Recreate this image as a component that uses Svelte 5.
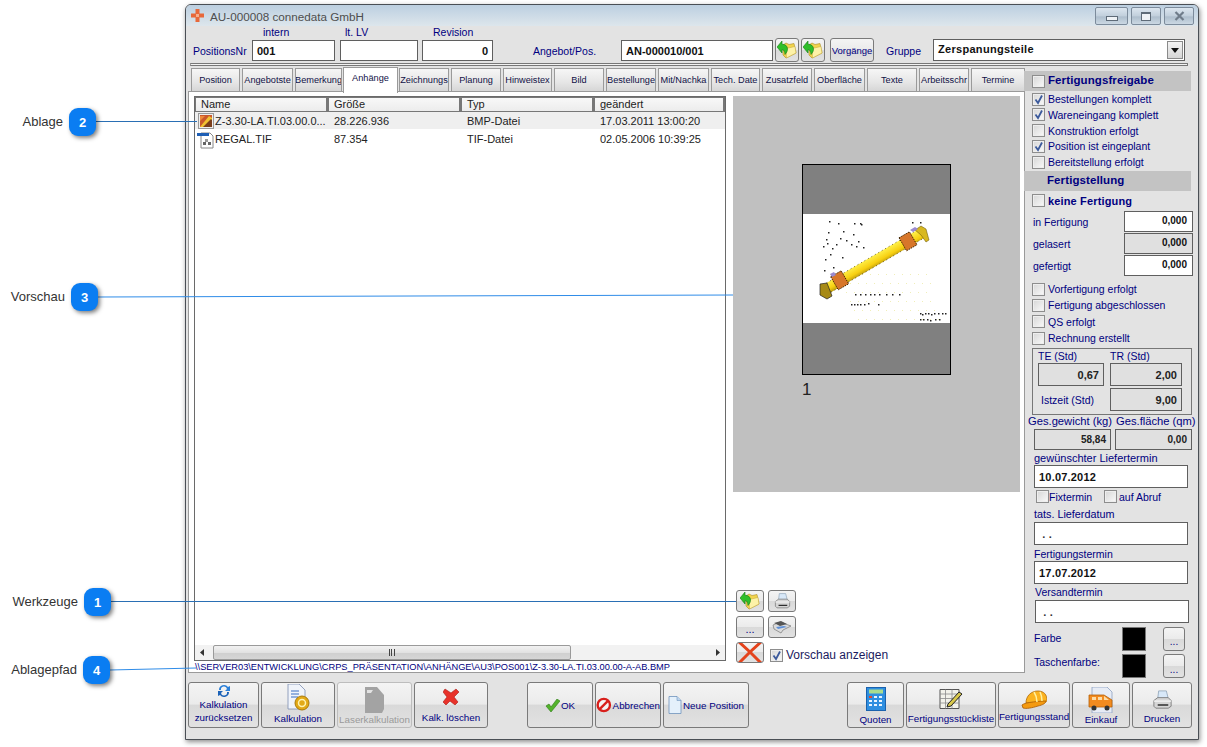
<script>
  const tabs = ['Position','Angebotste','Bemerkung','Anhänge','Zeichnungs','Planung','Hinweistex','Bild','Bestellunge','Mit/Nachka','Tech. Date','Zusatzfeld','Oberfläche','Texte','Arbeitsschr','Termine'];
  const callouts = [
    { label:'Ablage', n:2, cls:'c2', x1:96, y1:121.5, x2:197, y2:121.5, col:'#2a6fb4' },
    { label:'Vorschau', n:3, cls:'c3', x1:98, y1:297, x2:733, y2:295, col:'#2f8ce8' },
    { label:'Werkzeuge', n:1, cls:'c1', x1:111, y1:601.5, x2:736, y2:601.5, col:'#2a6fb4' },
    { label:'Ablagepfad', n:4, cls:'c4', x1:110, y1:670, x2:196, y2:668, col:'#2f8ce8' }
  ];
  const pathText = '\\\\SERVER03\\ENTWICKLUNG\\CRPS_PRÄSENTATION\\ANHÄNGE\\AU3\\POS001\\Z-3.30-LA.TI.03.00.00-A-AB.BMP';
  const firstChecks = [['Bestellungen komplett',true],['Wareneingang komplett',true],['Konstruktion erfolgt',false],['Position ist eingeplant',true],['Bereitstellung erfolgt',false]];
  const secondChecks = ['Vorfertigung erfolgt','Fertigung abgeschlossen','QS erfolgt','Rechnung erstellt'];
  const dots = [[27,7],[36,9],[52,9],[58,9],[59,10],[26,18],[41,17],[51,20],[38,24],[24,25],[56,27],[44,26],[49,30],[34,30],[25,29],[21,32],[30,34],[54,32],[61,33],[23,45],[40,43],[28,40],[22,56],[31,53],[110,8],[118,8],
    [53,80],[58,80],[63,80],[68,80],[72,80],[77,80],[84,80],[90,80],[97,80],[49,90],[52,90],[55,90],[58,90],[62,90],[66,89],[76,90],[118,99],[120,100],[123,99],[126,99],[129,100],[132,99],[136,99],[140,99],[143,99],[118,105],[121,105],[125,105],[128,106],[133,105],[137,105]];
  const faint = [];
  for (let r = 0; r < 6; r++) for (let c = 0; c < 14; c++) {
    const x = 28 + c * 8 + (r % 2) * 4, y = 60 + r * 9;
    if (x + (108 - y) * 0.6 > 55 && x < 144 - (108 - y) * 0.4) faint.push([x, y]);
  }
</script>

{#snippet cb(on)}
  <span class="cb">{#if on}<svg width="11" height="11" viewBox="0 0 11 11"><path d="M2.5 5.500 5 9 9 1.500" fill="none" stroke="#3c5a9c" stroke-width="1.800"/></svg>{/if}</span>
{/snippet}

{#snippet folder()}
  <svg width="20" height="20" viewBox="0 0 20 20">
    <path d="M6 5 9 3l3 1.500 5-1 2 9.500-10 5-3-3z" fill="#f2d44e" stroke="#a98b25" stroke-width=".6"/>
    <path d="M9 8.500l9-2 1 6.500-9.500 5z" fill="#fdf2a8" stroke="#c2a63a" stroke-width=".5"/>
    <path d="M0 7 5 1v3.200c3.500 0 5.500 2 5.500 4.800 0 2-.8 3.500-2.500 5.500-.3-3-1-4.800-3-4.800V13z" fill="#2fbf2a" stroke="#147a18" stroke-width=".6"/>
  </svg>
{/snippet}

{#snippet printer(s)}
  <svg width={s} height={s} viewBox="0 0 24 24">
    <path d="M8 2h8l2 8H7z" fill="#d8e8f8" stroke="#8aa0b5" stroke-width=".8"/>
    <path d="M3 12l4-3h11l3 3v6l-3 2H5l-2-2z" fill="#d6d6d6" stroke="#767676" stroke-width=".9"/>
    <path d="M7 16h11v1.600H7z" fill="#2e2e2e"/>
    <path d="M3 12h18v1.200H3z" fill="#f5f5f5"/>
  </svg>
{/snippet}

<div class="stage">
  {#each callouts as c}
    <div class="callout {c.cls}">
      <span class="ctext">{c.label}</span>
      <span class="badge">{c.n}</span>
    </div>
  {/each}

  <section class="window">
    <header class="titlebar">
      <svg class="appicon" width="13" height="13" viewBox="0 0 13 13">
        <path d="M4.500 0h4v4.500H13v4H8.500V13h-4V8.500H0v-4h4.500z" fill="#e8683a"/>
        <path d="M5 5h3v3H5z" fill="#f6b08f"/>
      </svg>
      <span class="title">AU-000008 connedata GmbH</span>
      <div class="winctl">
        <span class="wbtn wmin"><i></i></span>
        <span class="wbtn wmax"><i></i></span>
        <span class="wbtn wclose">
          <svg width="11" height="10" viewBox="0 0 11 10"><path d="M1.500 1l8 8M9.500 1l-8 8" stroke="#6f7c8a" stroke-width="2.200" fill="none"/></svg>
        </span>
      </div>
    </header>

    <div class="head">
      <span></span>
      <span class="lb l-intern">intern</span>
      <span class="lb l-lv">lt. LV</span>
      <span class="lb l-rev">Revision</span>
      <span class="rest"></span>

      <span class="lb up">PositionsNr</span>
      <div class="field bold">001</div>
      <div class="field g5"></div>
      <div class="field bold right g4">0</div>
      <span class="lb angebot up">Angebot/Pos.</span>
      <div class="field bold">AN-000010/001</div>
      <button class="btn small g2">{@render folder()}</button>
      <button class="btn small g2">{@render folder()}</button>
      <button class="btn vorg g5">Vorgänge</button>
      <span class="lb gruppe up">Gruppe</span>
      <div class="field bold select">
        <span class="seltext">Zerspanungsteile</span>
        <span class="arrow"><svg width="8" height="5" viewBox="0 0 8 5"><path d="M0 0h8L4 5z" fill="#111"/></svg></span>
      </div>
    </div>

    <div class="sep"></div>

    <div class="main">
      <div class="left">
        <nav class="tabs">
          {#each tabs as t}
            <span class="tab" class:active={t === 'Anhänge'}>{t}</span>
          {/each}
        </nav>
        <div class="panel">
          <div class="content">
            <div class="list">
              <div class="lhead">
                <span>Name</span><span>Größe</span><span>Typ</span><span>geändert</span>
              </div>
              <div class="row sel">
                <span class="namecell">
                  <svg class="ficon" width="16" height="16" viewBox="0 0 16 16">
                    <rect x=".5" y=".5" width="15" height="15" fill="#eee" stroke="#999"/>
                    <rect x="2" y="2" width="12" height="12" fill="#c9582c"/>
                    <path d="M2 14 11 3l3 2v9z" fill="#f1c232"/>
                    <path d="M5 14l8-8 1 1v7z" fill="#7a3e1c"/>
                    <path d="M2 8l5-5H2z" fill="#f08a3a"/>
                  </svg>Z-3.30-LA.TI.03.00.0...</span>
                <span>28.226.936</span><span>BMP-Datei</span><span>17.03.2011 13:00:20</span>
              </div>
              <div class="row">
                <span class="namecell tif">
                  <svg class="ficon" width="18" height="17" viewBox="0 0 18 17">
                    <path d="M4 1h9l3 3v12H4z" fill="#fff" stroke="#888"/>
                    <rect x="0" y="1" width="12" height="3" fill="#1f5fb5"/>
                    <rect x="6" y="10" width="3" height="3" fill="#666"/><rect x="11" y="10" width="3" height="3" fill="#666"/><rect x="8" y="7" width="3" height="3" fill="#999"/>
                  </svg>REGAL.TIF</span>
                <span>87.354</span><span>TIF-Datei</span><span>02.05.2006 10:39:25</span>
              </div>
              <div class="hscroll">
                <span class="sarrow"><svg width="4" height="7" viewBox="0 0 4 7"><path d="M4 0v7L0 3.500z" fill="#333"/></svg></span>
                <div class="thumb"><span class="grip"></span></div>
                <span class="sarrow"><svg width="4" height="7" viewBox="0 0 4 7"><path d="M0 0v7l4-3.500z" fill="#333"/></svg></span>
              </div>
            </div>

            <div class="previewcol">
              <div class="preview">
                <svg class="page" width="149" height="211" viewBox="0 0 149 211">
                  <defs>
                    <linearGradient id="tube" gradientUnits="userSpaceOnUse" x1="66" y1="88" x2="75" y2="104">
                      <stop offset="0" stop-color="#e0b80f"/>
                      <stop offset=".3" stop-color="#fff04a"/>
                      <stop offset=".7" stop-color="#f7cf10"/>
                      <stop offset="1" stop-color="#a88a10"/>
                    </linearGradient>
                  </defs>
                  <rect x=".5" y=".5" width="148" height="210" fill="#808080" stroke="#000"/>
                  <rect x="1" y="50" width="147" height="109" fill="#fff"/>
                  {#each faint as d}<rect x={d[0]} y={d[1] + 50} width="1" height="1" fill="#f0eeb8"/>{/each}
                  <path d="M21 121 117 65l5 9-96 56z" fill="url(#tube)" stroke="#3a2c00" stroke-width=".7" stroke-dasharray="1 3"/>
                  <path d="M18 120l7-1 5 13-5 3-7-4z" fill="#a78a16" stroke="#222" stroke-width=".7"/>
                  <path d="M113 66l6-4 5 3 3 11-3 2-5-7z" fill="#d8b820" stroke="#5c4a00" stroke-width=".5"/>
                  <path d="M28.750 112.800 39.150 106.800 46.650 119.800 36.250 125.800z" fill="#d7762a" stroke="#3e2400" stroke-width="1" stroke-dasharray="1.500 1"/>
                  <path d="M97.050 73.800 107.450 67.800 114.950 80.800 104.550 86.800z" fill="#d7762a" stroke="#3e2400" stroke-width="1" stroke-dasharray="1.500 1"/>
                  <path d="M108 66l5-3 3 2-5 3zM28 110l4-2 2 3-4 2z" fill="#9a8ad0"/>
                  {#each dots as d}<rect x={d[0]} y={d[1] + 50} width="1.500" height="1.500" fill="#222"/>{/each}
                </svg>
                <span class="pnum">1</span>
              </div>
              <div class="tools">
                <button class="btn tool">{@render folder()}</button>
                <button class="btn tool">{@render printer(19)}</button>
                <span></span>
                <button class="btn tool dots">...</button>
                <button class="btn tool">
                  <svg width="20" height="14" viewBox="0 0 20 14"><path d="M1 5l7-3 11 4-8 4-2 3-7-4z" fill="#dcdcdc" stroke="#777" stroke-width=".7"/><path d="M2 3l7-2 6 3-7 2z" fill="#555"/><path d="M4 7l8-1 3 1-9 2z" fill="#5f90d8"/></svg>
                </button>
                <span></span>
                <button class="btn tool xbtn">
                  <svg width="26" height="21" viewBox="0 0 26 21"><path d="M2 0l11 10L24 0M2 21l11-11 11 11" fill="none" stroke="#e4431c" stroke-width="3"/></svg>
                </button>
                <label class="vcheck">{@render cb(true)}<span>Vorschau anzeigen</span></label>
              </div>
            </div>
          </div>
          <div class="path">{pathText}</div>
        </div>
      </div>

      <aside class="side">
        <div class="band"><span class="cbwrap">{@render cb(false)}</span><span class="bandtext">Fertigungsfreigabe</span></div>
        <div class="checks c-a">
          {#each firstChecks as [t, on]}
            <label class="chk">{@render cb(on)}<span>{t}</span></label>
          {/each}
        </div>
        <div class="band two"><span class="bandtext">Fertigstellung</span></div>
        <label class="chk keine">{@render cb(false)}<span>keine Fertigung</span></label>
        <div class="nums">
          <span class="lb">in Fertigung</span><div class="field num">0,000</div>
          <span class="lb">gelasert</span><div class="field num off">0,000</div>
          <span class="lb">gefertigt</span><div class="field num">0,000</div>
        </div>
        <div class="checks c-b">
          {#each secondChecks as t}
            <label class="chk">{@render cb(false)}<span>{t}</span></label>
          {/each}
        </div>
        <div class="group">
          <span class="lb">TE (Std)</span><span class="lb">TR (Std)</span>
          <div class="field off val">0,67</div><div class="field off val">2,00</div>
          <span class="lb ist">Istzeit (Std)</span><div class="field off val">9,00</div>
        </div>
        <div class="ges">
          <span class="lb">Ges.gewicht (kg)</span><span class="lb">Ges.fläche (qm)</span>
          <div class="field off val sm">58,84</div><div class="field off val sm">0,00</div>
        </div>
        <div class="dates">
          <span class="lb d1">gewünschter Liefertermin</span>
          <div class="field bold date">10.07.2012</div>
          <div class="fix">
            <label class="chk">{@render cb(false)}<span>Fixtermin</span></label>
            <label class="chk">{@render cb(false)}<span>auf Abruf</span></label>
          </div>
          <span class="lb d2">tats. Lieferdatum</span>
          <div class="field bold date dim">&nbsp;. .</div>
          <span class="lb d3">Fertigungstermin</span>
          <div class="field bold date">17.07.2012</div>
          <span class="lb d4">Versandtermin</span>
          <div class="field bold date shift dim">&nbsp;. .</div>
        </div>
        <div class="colors">
          <span class="lb farbe">Farbe</span><span class="swatch"></span><button class="btn pick">...</button>
          <span class="lb tf">Taschenfarbe:</span><span class="swatch"></span><button class="btn pick">...</button>
        </div>
      </aside>
    </div>

    <footer class="foot">
      <button class="btn big rst">
        <svg width="16" height="14" viewBox="0 0 16 14"><path d="M3 6a5 5 0 0 1 9-3l2-1v5H9l2-2a3 3 0 0 0-6 1z" fill="#2a7fd8"/><path d="M13 8a5 5 0 0 1-9 3l-2 1V7h5L5 9a3 3 0 0 0 6-1z" fill="#1b62b8"/></svg>
        <span>Kalkulation<br/>zurücksetzen</span>
      </button>
      <button class="btn big k">
        <svg width="24" height="28" viewBox="0 0 24 28">
          <path d="M2 0h11l6 6v19H2z" fill="#f0f4fb" stroke="#7c8db0" stroke-width=".8"/>
          <path d="M5 7h8M5 10h8M5 13h7" stroke="#3b6ec0" stroke-width="1"/>
          <circle cx="16" cy="19" r="7" fill="#e2a917" stroke="#a97a0b"/>
          <circle cx="16" cy="19" r="3.500" fill="none" stroke="#fff3b0" stroke-width="1.500"/>
        </svg>
        <span>Kalkulation</span>
      </button>
      <button class="btn big disabled">
        <svg width="22" height="26" viewBox="0 0 22 26"><path d="M1 0h12l7 8v14l-2 4H1z" fill="#a3a3a3"/><path d="M3 3h6l-2 3H3z" fill="#e3e3e3"/></svg>
        <span>Laserkalkulation</span>
      </button>
      <button class="btn big kl">
        <svg width="16" height="17" viewBox="0 0 16 17"><path d="M2 1l6 4 5-4 3 3-5 5 4 5-3 3-5-4-4 4-3-3 4-5L0 4z" fill="#e8322a" stroke="#a81d18" stroke-width=".6"/></svg>
        <span>Kalk. löschen</span>
      </button>
      <button class="btn row-btn okb">
        <svg width="15" height="13" viewBox="0 0 15 13"><path d="M1 7l3-2 2 3 6-8 3 2-9 11z" fill="#53b32b" stroke="#2c7a15" stroke-width=".6"/></svg>
        <span>OK</span>
      </button>
      <button class="btn row-btn ab">
        <svg width="16" height="16" viewBox="0 0 16 16"><circle cx="8" cy="8" r="6.300" fill="#f4f4f4" stroke="#d8201c" stroke-width="2.400"/><path d="M3.500 12.500l9-9" stroke="#d8201c" stroke-width="2.400"/></svg>
        <span>Abbrechen</span>
      </button>
      <button class="btn row-btn np">
        <svg width="14" height="18" viewBox="0 0 14 18"><path d="M1 .5h8l4 4v13H1z" fill="#e4f0fb" stroke="#6f93bd" stroke-width=".8"/><path d="M9 .5v4h4" fill="#bcd5ee" stroke="#6f93bd" stroke-width=".6"/></svg>
        <span>Neue Position</span>
      </button>
      <button class="btn big q">
        <svg width="20" height="24" viewBox="0 0 20 24">
          <rect x=".5" y=".5" width="19" height="23" fill="#2f8fe0" stroke="#1a62ad"/>
          <rect x="3" y="2.500" width="14" height="4" fill="#a9dc8f"/>
          <g fill="#eaf5ff"><rect x="3" y="9" width="3" height="2"/><rect x="8" y="9" width="3" height="2"/><rect x="13" y="9" width="3" height="2"/><rect x="3" y="13" width="3" height="2"/><rect x="8" y="13" width="3" height="2"/><rect x="13" y="13" width="3" height="2"/><rect x="3" y="17" width="3" height="2"/><rect x="8" y="17" width="3" height="2"/><rect x="13" y="17" width="3" height="2"/></g>
          <rect x="3" y="9" width="3" height="2" fill="#e4472e"/>
        </svg>
        <span>Quoten</span>
      </button>
      <button class="btn big fs">
        <svg width="24" height="22" viewBox="0 0 24 22">
          <path d="M1 1.500h19v19H1z" fill="#f2f2ea" stroke="#555"/>
          <path d="M1 6h19M1 10.500h19M1 15h19M6.500 1.500v19M13 1.500v19" stroke="#8a8a8a" stroke-width=".8" fill="none"/>
          <path d="M9 16l11-12 3 2-11 12-4 1z" fill="#d8c84a" stroke="#222" stroke-width="1"/>
        </svg>
        <span>Fertigungsstückliste</span>
      </button>
      <button class="btn big hat">
        <svg width="26" height="21" viewBox="0 0 26 21">
          <path d="M5 13c0-7 5-12 12-12 6 0 9 4 9 9 0 1-1 2-2 2z" fill="#fcb320" stroke="#b06a05" stroke-width=".8"/>
          <path d="M1 15c3-3 20-4 24-4 0 2-3 4-8 5-6 2-12 3-15 2z" fill="#f49a10" stroke="#a85c04" stroke-width=".8"/>
          <path d="M13 2c2 3 3 6 3 10M19 2c1 2 2 5 2 9" stroke="#fff1a0" stroke-width="1.500" fill="none"/>
        </svg>
        <span>Fertigungsstand</span>
      </button>
      <button class="btn big ek">
        <svg width="26" height="26" viewBox="0 0 26 26">
          <path d="M4 0h15l5 5v21H4z" fill="#e7ecf5" stroke="#8ea1c2" stroke-width=".8"/>
          <path d="M1 8h15l8 5v7H1z" fill="#f28b20" stroke="#b25f08" stroke-width=".8"/>
          <path d="M16 9l5 4h-5zM4 10h4v3H4zM10 10h4v3h-4z" fill="#fbdca8"/>
          <circle cx="6" cy="21" r="2.500" fill="#333"/><circle cx="19" cy="21" r="2.500" fill="#333"/>
        </svg>
        <span>Einkauf</span>
      </button>
      <button class="btn big dr">
        {@render printer(23)}
        <span>Drucken</span>
      </button>
    </footer>
  </section>

  <svg class="lines" width="1207" height="747">
    {#each callouts as c}
      <line x1={c.x1} y1={c.y1} x2={c.x2} y2={c.y2} stroke={c.col} stroke-width="1"/>
    {/each}
  </svg>
</div>

<style>
  :global(body) { margin: 0; background: #fff; }
  .stage {
    position: relative; width: 1207px; height: 747px; overflow: hidden; background: #fff;
    font-family: "Liberation Sans", Arial, sans-serif; font-size: 10.5px; color: #000080;
  }
  button { font-family: inherit; padding: 0; margin: 0; color: #000080; }
  .lines { position: absolute; left: 0; top: 0; pointer-events: none; }

  .callout { position: absolute; display: flex; align-items: center; height: 28px; z-index: 2; }
  .c2 { right: 1111px; top: 108px; }
  .c3 { right: 1109px; top: 283px; }
  .c1 { right: 1096px; top: 588px; }
  .c4 { right: 1097px; top: 656px; }
  .ctext { font-size: 13px; color: #333; margin-right: 6px; margin-top: -1px; }
  .badge {
    width: 27px; height: 28px; border-radius: 9px; background: #0a7df2; color: #fff;
    font-weight: 700; font-size: 13px; display: flex; align-items: center; justify-content: center;
    box-shadow: 2px 2px 4px rgba(0,0,0,.5);
  }

  .window {
    position: absolute; left: 185px; top: 4px; width: 1012px; height: 734px;
    background: #e3e3e3; border: 1px solid #4a4f55; border-radius: 6px 6px 0 0;
    box-shadow: 1px 2px 5px rgba(0,0,0,.45); display: flex; flex-direction: column;
  }
  .titlebar {
    height: 21px; flex: none; display: flex; align-items: center; padding-left: 5px;
    background: linear-gradient(#bccfe0, #dde6ec); border-radius: 5px 5px 0 0;
  }
  .appicon { margin-right: 6px; }
  .title { font-size: 11.7px; color: #4e4e4e; padding-top: 2px; }
  .winctl { margin-left: auto; display: flex; gap: 3px; padding-right: 4px; padding-top: 1px; }
  .wbtn {
    height: 16px; border: 1px solid #7c8b9b; border-radius: 2px; display: flex; align-items: center; justify-content: center;
    background: linear-gradient(#dce6ef, #c1cfdc 50%, #aebecd 55%, #cbd8e3);
  }
  .wmin { width: 31px; } .wmax { width: 28px; } .wclose { width: 28px; }
  .wmin i { width: 10px; height: 3px; border: 1px solid #5e6b78; background: #eef2f6; margin-top: 5px; }
  .wmax i { width: 8px; height: 6px; border: 1px solid #5e6b78; border-top-width: 2px; background: #eef2f6; }

  .head {
    flex: none; display: grid; padding-left: 7px;
    grid-template-columns: 59px 83px 83px 75px 128px 152px 26px 26px 49px 59px 252px;
    grid-template-rows: 14px 23px; align-items: start;
  }
  .rest { grid-column: 5 / -1; }
  .l-intern { padding-left: 11px; }
  .l-lv { padding-left: 10px; }
  .l-rev { padding-left: 15px; }
  .up { align-self: center; margin-top: -2px; }
  .head .field { height: 21px; }
  .g5 { margin-left: 5px; }
  .g4 { margin-left: 4px; }
  .g2 { margin-left: 2px; }
  .angebot { padding-left: 40px; }
  .gruppe { padding-left: 12px; }
  .lb { font-size: 10.5px; color: #000080; white-space: nowrap; }

  .field {
    box-sizing: border-box; border: 1px solid #5f5f5f; background: #fff; color: #111;
    padding: 0 4px; display: flex; align-items: center; font-size: 11px; white-space: nowrap;
  }
  .bold { font-weight: 700; }
  .right { justify-content: flex-end; }
  .head .select { justify-content: space-between; padding-right: 1px; letter-spacing: .3px; height: 22px; margin-top: -1px; }
  .seltext { margin-top: -2px; }
  .arrow {
    width: 16px; height: 18px; box-sizing: border-box; border: 1px solid #8a8a8a; background: linear-gradient(#f4f4f4, #d6d6d6);
    display: flex; align-items: center; justify-content: center;
  }

  .btn {
    box-sizing: border-box; border: 1px solid #7a7a7a; border-radius: 3px; color: #000080;
    background: linear-gradient(#f4f4f4, #ebebeb 48%, #d9d9d9 50%, #e2e2e2);
    display: flex; align-items: center; justify-content: center; overflow: hidden;
  }
  .small { width: 24px; height: 24px; margin-top: -2px; }
  .vorg { width: 44px; height: 24px; font-size: 9.5px; margin-top: -2px; }

  .sep { flex: none; height: 3px; margin: 0 10px 2px 4px; border: 1px solid #777; border-left-color: #999; box-sizing: border-box; background: #f2f2f2; }

  .main { flex: 1; display: flex; min-height: 0; }
  .left { width: 839px; flex: none; padding-left: 2px; box-sizing: border-box; }
  .tabs {
    display: grid; padding: 0 0 0 3px; height: 23px; box-sizing: border-box;
    grid-template-columns: 49px 51px 47px 53px 50px 50px 49px 50px 50px 51px 49px 50px 51px 50px 50px 54px;
    column-gap: 2px; align-items: start;
  }
  .tab {
    height: 23px; box-sizing: border-box; border: 1px solid #9a9a9a; border-bottom: 0; font-size: 9.2px; color: #111146;
    background: linear-gradient(#f6f6f6, #e6e6e6 60%, #d6d6d6);
    display: flex; align-items: center; justify-content: center; overflow: hidden; white-space: nowrap;
  }
  .tab.active { height: 26px; margin: -1px -1px 0; background: #fff; position: relative; z-index: 1; padding-bottom: 5px; }

  .panel { height: 582px; box-sizing: border-box; background: #fff; border: 1px solid #9a9a9a; padding: 4px 0 0 5px; display: flex; flex-direction: column; }
  .content { display: flex; gap: 7px; height: 565px; flex: none; }
  .list { width: 532px; box-sizing: border-box; border: 1px solid #6a6a6a; display: flex; flex-direction: column; font-size: 11px; color: #222; }
  .lhead { display: grid; grid-template-columns: 133px 133px 133px 1fr; height: 15px; flex: none; }
  .lhead span {
    box-sizing: border-box; padding-left: 5px; line-height: 13px; border: 1px solid #777; border-width: 1px 2px 1px 1px; background: linear-gradient(#f8f8f8, #ececec);
  }
  .row { display: grid; grid-template-columns: 133px 133px 133px 1fr; height: 17px; align-items: center; flex: none; }
  .row > span { padding-left: 6px; white-space: nowrap; }
  .row .namecell { padding-left: 3px; display: flex; align-items: center; gap: 1px; }
  .row .tif { padding-left: 2px; gap: 0; }
  .tif .ficon { margin-top: 3px; }
  .row.sel { background: #efefef; }
  .ficon { flex: none; }
  .hscroll { margin-top: auto; height: 15px; display: flex; align-items: center; justify-content: space-between; padding: 0 5px; background: #f2f2f2; flex: none; }
  .sarrow { display: flex; width: 9px; }
  .sarrow:last-child { justify-content: flex-end; }
  .thumb {
    width: 358px; height: 15px; margin-right: auto; margin-left: 4px; box-sizing: border-box; border: 1px solid #9a9a9a; border-radius: 2px;
    background: linear-gradient(#f2f2f2, #e2e2e2 50%, #cfcfcf 52%, #d6d6d6); display: flex; align-items: center; justify-content: center;
  }
  .grip { width: 6px; height: 7px; background: repeating-linear-gradient(90deg, #444 0 1px, transparent 1px 2.5px); }

  .previewcol { width: 287px; display: flex; flex-direction: column; }
  .preview { height: 396px; background: #c0c0c0; flex: none; display: flex; flex-direction: column; align-items: flex-start; padding: 68px 0 0 69px; box-sizing: border-box; }
  .page { display: block; }
  .pnum { font-size: 17px; color: #222; margin-top: 5px; line-height: 20px; }
  .tools {
    margin-top: auto; display: grid; grid-template-columns: 28px 28px 1fr; column-gap: 4px; row-gap: 4px;
    grid-template-rows: 22px 22px 21px; padding-left: 3px; margin-bottom: -2px; color: #111166;
  }
  .tool { width: 28px; }
  .dots { font-size: 11px; padding-top: 4px; }
  .vcheck { grid-column: 2 / 4; display: flex; align-items: center; gap: 3px; font-size: 12px; padding-left: 2px; color: #1a1a60; padding-top: 5px; }
  .path { font-size: 9.25px; color: #000080; padding-left: 1px; line-height: 13px; white-space: nowrap; }

  .side { flex: 1; min-width: 0; margin-left: -1px; display: flex; flex-direction: column; font-size: 10.5px; padding-top: 3px; }
  .band { width: 167px; height: 20px; background: #c3c3c3; display: flex; align-items: center; flex: none; }
  .cbwrap { margin-left: 8px; display: flex; }
  .bandtext { font-size: 11.5px; font-weight: 700; color: #000080; margin-left: 3px; letter-spacing: .1px; margin-top: -2px; }
  .two .bandtext { margin-left: 23px; }
  .band.two { margin-top: 1px; }
  .cb {
    width: 13px; height: 13px; flex: none; box-sizing: border-box; border: 1px solid #8d8d8d; background: linear-gradient(135deg, #d6d6d6, #fafafa);
    box-shadow: inset 0 0 0 1px #eee; display: inline-flex; align-items: center; justify-content: center;
  }
  .chk { display: flex; align-items: center; gap: 3px; white-space: nowrap; height: 15.75px; color: #000080; }
  .checks { padding-left: 8px; flex: none; }
  .c-a { margin-top: .3px; }
  .c-b { margin-top: 5px; }
  .c-b .chk { height: 16.3px; }
  .keine { padding-left: 8px; height: 17px; font-weight: 700; font-size: 11px; margin-top: 1px; letter-spacing: .15px; }
  .nums { display: grid; grid-template-columns: 91px 69px; grid-auto-rows: 21px; row-gap: 1px; padding-left: 9px; align-items: center; margin-top: 2px; }
  .num { justify-content: flex-end; height: 21px; font-size: 10px; font-weight: 700; align-items: flex-start; padding-top: 3px; padding-right: 5px; }
  .off { background: #e0e0e0; }
  .group {
    box-sizing: border-box; width: 160px; height: 67px; margin: 2px 0 0 8px; border: 1px solid #777; padding: 1px 9px 0 5px;
    display: grid; grid-template-columns: 66px 72px; column-gap: 6px; grid-template-rows: 13px 23px 25px; flex: none;
  }
  .group .field:last-child { margin-top: 2px; height: 23px; }
  .ist { align-self: center; padding-left: 3px; padding-top: 2px; }
  .val { justify-content: flex-end; font-weight: 700; font-size: 11px; color: #222; }
  .ges { display: grid; grid-template-columns: 77px 77px; column-gap: 4px; grid-template-rows: 14px 21px; padding-left: 10px; flex: none; }
  .ges .lb { font-size: 11.2px; }
  .ges .lb:first-child { margin-left: -6px; }
  .ges .lb:nth-child(2) { margin-left: 1px; }
  .sm { font-size: 10px; }
  .dates { display: flex; flex-direction: column; padding-left: 10px; flex: none; }
  .date { width: 154px; height: 23px; letter-spacing: .2px; flex: none; }
  .dim { color: #333; }
  .shift { margin-left: 1px; }
  .d1 { margin-top: 2px; height: 13px; line-height: 13px; font-size: 11px; }
  .d2 { margin-top: 3px; height: 15px; line-height: 15px; font-size: 10.8px; }
  .d3 { margin-top: 2px; height: 14px; line-height: 14px; }
  .d4 { margin-top: 1px; height: 15px; line-height: 15px; padding-left: 1px; }
  .fix { display: flex; padding-left: 2px; gap: 10px; margin-top: 1px; height: 15px; }
  .fix .chk { height: 15px; gap: 0; }
  .fix .chk:first-child { width: 58px; }
  .fix .chk:last-child { gap: 2px; }
  .colors { display: grid; grid-template-columns: 88px 24px 22px; padding-left: 10px; grid-template-rows: 25px 24px; row-gap: 3px; margin-top: 3px; align-items: center; flex: none; }
  .farbe { margin-top: -2px; }
  .tf { margin-top: -8px; }
  .swatch { width: 24px; height: 24px; background: #000; border: 1px solid #777; box-sizing: border-box; }
  .pick { width: 22px; height: 24px; margin-left: 17px; font-size: 10px; padding-top: 6px; }

  .foot { position: absolute; left: 2px; top: 677px; display: flex; gap: 2px; height: 46px; }
  .big { height: 46px; flex-direction: column; font-size: 9.8px; white-space: nowrap; padding-top: 2px; gap: 1px; }
  .row-btn { height: 46px; font-size: 9.8px; gap: 1px; }
  .rst { width: 71px; padding-top: 0; gap: 0; } .rst span { line-height: 13px; } .rst svg { margin-top: -3px; }
  .k { width: 74px; padding-top: 0; padding-bottom: 2px; } .disabled { width: 75px; color: #9a9a9a; border-color: #bdbdbd; }
  .kl { width: 74px; gap: 7px; padding-top: 0; }
  .okb { width: 66px; margin-left: 37px; } .ab { width: 66px; } .np { width: 86px; }
  .q { width: 57px; margin-left: 96px; gap: 3px; } .fs { width: 90px; gap: 3px; } .hat { width: 72px; gap: 0; } .ek { width: 58px; } .dr { width: 60px; gap: 1px; }
</style>
